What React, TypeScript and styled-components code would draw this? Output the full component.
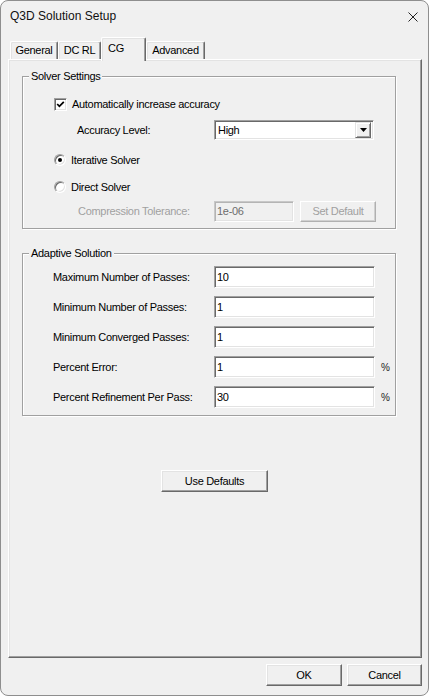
import React from "react";
import styled, { createGlobalStyle } from "styled-components";

const GlobalStyle = createGlobalStyle`
  html, body {
    margin: 0;
    padding: 0;
    background: #ffffff;
  }
  body {
    font-family: "Liberation Sans", Arial, sans-serif;
  }
`;

const Window = styled.div`
  box-sizing: border-box;
  width: 429px;
  height: 696px;
  display: flex;
  flex-direction: column;
  background: #f0f0f0;
  border: 1px solid #8e8e8e;
  border-radius: 8px;
  overflow: hidden;
  font-family: "Liberation Sans", Arial, sans-serif;
  font-size: 11px;
  letter-spacing: -0.3px;
  color: #000;
`;

const TitleBar = styled.div`
  height: 36px;
  flex: none;
  display: flex;
  align-items: flex-start;
  justify-content: space-between;
  padding: 0 10px 0 9px;
  box-sizing: border-box;
`;

const Title = styled.div`
  margin-top: 8px;
  font-size: 12px;
  line-height: 15px;
  letter-spacing: 0;
  color: #111;
`;

const CloseIcon = styled.svg`
  margin-top: 11px;
  width: 10px;
  height: 10px;
`;

const Body = styled.div`
  flex: 1;
  display: flex;
  flex-direction: column;
  padding: 0 6px 0 7px;
`;

const TabStrip = styled.div`
  height: 22px;
  flex: none;
  display: flex;
  align-items: flex-end;
  padding-left: 2px;
`;

const Tab = styled.div<{ $width: number; $active?: boolean }>`
  position: relative;
  z-index: ${(p) => (p.$active ? 2 : 1)};
  box-sizing: border-box;
  width: ${(p) => p.$width}px;
  height: ${(p) => (p.$active ? 24 : 18)}px;
  margin-bottom: ${(p) => (p.$active ? -2 : 0)}px;
  padding: ${(p) => (p.$active ? "0 0 3px 6px" : "0")};
  display: flex;
  align-items: center;
  justify-content: ${(p) => (p.$active ? "flex-start" : "center")};
  background: #f0f0f0;
  border-top: 1px solid #ffffff;
  border-left: 1px solid #ffffff;
  border-right: 1px solid #696969;
  box-shadow: inset -1px 0 0 #a0a0a0, inset 1px 1px 0 #e3e3e3;
  border-radius: 2px 2px 0 0;
  line-height: 13px;
`;

const Page = styled.div`
  flex: none;
  height: 599px;
  box-sizing: border-box;
  display: flex;
  flex-direction: column;
  padding: 0 25px 0 13px;
  border: 1px solid;
  border-color: #ffffff #696969 #696969 #ffffff;
  box-shadow: inset -1px -1px 0 #a0a0a0, inset 1px 1px 0 #e3e3e3;
`;

const Group = styled.fieldset<{ $top: number; $pt: number; $pb: number }>`
  margin: ${(p) => p.$top}px 0 0 0;
  padding: ${(p) => p.$pt}px 0 ${(p) => p.$pb}px 0;
  border: 1px solid #a0a0a0;
  box-shadow: inset 1px 1px 0 #ffffff, 1px 1px 0 #ffffff;
  min-width: 0;
`;

const Legend = styled.legend`
  margin-left: 6px;
  padding: 0 2px;
  line-height: 14px;
  background: #f0f0f0;
`;

const Row = styled.div<{ $h: number; $indent: number }>`
  height: ${(p) => p.$h}px;
  display: grid;
  grid-template-columns: ${(p) => 191 - p.$indent}px auto;
  align-items: center;
  padding-left: ${(p) => p.$indent}px;
`;

const OptionRow = styled.label<{ $h: number }>`
  height: ${(p) => p.$h}px;
  display: flex;
  align-items: center;
  gap: 5px;
  padding-left: 31px;
`;

const Label = styled.span<{ $disabled?: boolean }>`
  color: ${(p) => (p.$disabled ? "#a0a0a0" : "#000")};
  white-space: nowrap;
`;

const Controls = styled.div`
  display: flex;
  align-items: center;
  gap: 6px;
`;

const Sunken = styled.div<{ $width: number; $height: number }>`
  box-sizing: border-box;
  width: ${(p) => p.$width}px;
  height: ${(p) => p.$height}px;
  border: 1px solid;
  border-color: #a0a0a0 #ffffff #ffffff #a0a0a0;
  box-shadow: inset 1px 1px 0 #696969, inset -1px -1px 0 #e3e3e3;
  background: #ffffff;
`;

const TextBox = styled(Sunken)<{ $disabled?: boolean }>`
  display: flex;
  align-items: center;
  padding: 0 2px;
  color: ${(p) => (p.$disabled ? "#6d6d6d" : "#000")};
  background: ${(p) => (p.$disabled ? "#f0f0f0" : "#ffffff")};
  ${(p) =>
    p.$disabled &&
    `
    border-color: #c8c8c8 #ffffff #ffffff #c8c8c8;
    box-shadow: inset 1px 1px 0 #b4b4b4, inset -1px -1px 0 #e3e3e3;
  `}
`;

const Select = styled(Sunken)`
  display: flex;
  align-items: center;
  justify-content: space-between;
  padding: 2px 2px 2px 3px;
`;

const DropButton = styled.div`
  box-sizing: border-box;
  width: 16px;
  height: 16px;
  display: flex;
  align-items: center;
  justify-content: center;
  background: #f0f0f0;
  border: 1px solid;
  border-color: #e3e3e3 #696969 #696969 #e3e3e3;
  box-shadow: inset 1px 1px 0 #ffffff, inset -1px -1px 0 #a0a0a0;
`;

const Unit = styled.span`
  font-size: 10px;
  color: #222;
`;

const CheckBox = styled(Sunken)`
  flex: none;
  display: flex;
  align-items: center;
  justify-content: center;
`;

const Radio = styled(Sunken)`
  flex: none;
  border-radius: 50%;
  display: flex;
  align-items: center;
  justify-content: center;
`;

const Dot = styled.span`
  width: 4px;
  height: 4px;
  border-radius: 50%;
  background: #000;
`;

const Button = styled.button<{ $width: number; $height?: number }>`
  box-sizing: border-box;
  width: ${(p) => p.$width}px;
  height: ${(p) => p.$height ?? 22}px;
  padding: 0;
  font-family: "Liberation Sans", Arial, sans-serif;
  font-size: 11px;
  letter-spacing: -0.3px;
  color: #000;
  background: #f0f0f0;
  border: 1px solid;
  border-color: #ffffff #696969 #696969 #ffffff;
  box-shadow: inset -1px -1px 0 #a0a0a0, inset 1px 1px 0 #e3e3e3;
  border-radius: 0;
  &:disabled {
    color: #a0a0a0;
    border-color: #ffffff #b0b0b0 #b0b0b0 #ffffff;
    box-shadow: inset -1px -1px 0 #d0d0d0;
  }
`;

const DefaultsButton = styled(Button)`
  align-self: flex-start;
  margin: 54px 0 0 139px;
`;

const Footer = styled.div`
  flex: 1;
  display: flex;
  justify-content: flex-end;
  align-items: flex-start;
  gap: 5px;
  padding-top: 6px;
`;

const passes = [
  { label: "Maximum Number of Passes:", value: "10" },
  { label: "Minimum Number of Passes:", value: "1" },
  { label: "Minimum Converged Passes:", value: "1" },
  { label: "Percent Error:", value: "1", unit: "%" },
  { label: "Percent Refinement Per Pass:", value: "30", unit: "%" },
];

const App = () => {
  return (
    <>
      <GlobalStyle />
      <Window>
        <TitleBar>
          <Title>Q3D Solution Setup</Title>
          <CloseIcon viewBox="0 0 10 10">
            <path d="M0.5 0.5 L9.5 9.5 M9.5 0.5 L0.5 9.5" stroke="#222" strokeWidth="1" fill="none" />
          </CloseIcon>
        </TitleBar>
        <Body>
          <TabStrip>
            <Tab $width={48}>General</Tab>
            <Tab $width={43}>DC RL</Tab>
            <Tab $width={45} $active>
              CG
            </Tab>
            <Tab $width={59}>Advanced</Tab>
          </TabStrip>
          <Page>
            <Group $top={9} $pt={8} $pb={3}>
              <Legend>Solver Settings</Legend>
              <OptionRow $h={26}>
                <CheckBox $width={13} $height={13}>
                  <svg width="9" height="9" viewBox="0 0 9 9">
                    <polyline points="1.2,4 3.4,6.3 7.8,1.8" stroke="#000" strokeWidth="1.8" fill="none" />
                  </svg>
                </CheckBox>
                <Label>Automatically increase accuracy</Label>
              </OptionRow>
              <Row $h={26} $indent={54}>
                <Label>Accuracy Level:</Label>
                <Select $width={160} $height={20}>
                  <span>High</span>
                  <DropButton>
                    <svg width="7" height="4" viewBox="0 0 7 4">
                      <polygon points="0,0 7,0 3.5,4" fill="#000" />
                    </svg>
                  </DropButton>
                </Select>
              </Row>
              <OptionRow $h={34}>
                <Radio $width={12} $height={12}>
                  <Dot />
                </Radio>
                <Label>Iterative Solver</Label>
              </OptionRow>
              <OptionRow $h={20}>
                <Radio $width={12} $height={12} />
                <Label>Direct Solver</Label>
              </OptionRow>
              <Row $h={28} $indent={55}>
                <Label $disabled>Compression Tolerance:</Label>
                <Controls>
                  <TextBox $width={80} $height={21} $disabled>
                    1e-06
                  </TextBox>
                  <Button $width={76} $height={21} disabled>
                    Set Default
                  </Button>
                </Controls>
              </Row>
            </Group>

            <Group $top={17} $pt={2} $pb={3}>
              <Legend>Adaptive Solution</Legend>
              {passes.map((p) => (
                <Row key={p.label} $h={30} $indent={30}>
                  <Label>{p.label}</Label>
                  <Controls>
                    <TextBox $width={161} $height={22}>
                      {p.value}
                    </TextBox>
                    {p.unit && <Unit>{p.unit}</Unit>}
                  </Controls>
                </Row>
              ))}
            </Group>

            <DefaultsButton $width={107}>Use Defaults</DefaultsButton>
          </Page>
          <Footer>
            <Button $width={76} $height={22}>
              OK
            </Button>
            <Button $width={75} $height={22}>
              Cancel
            </Button>
          </Footer>
        </Body>
      </Window>
    </>
  );
};

export default App;
